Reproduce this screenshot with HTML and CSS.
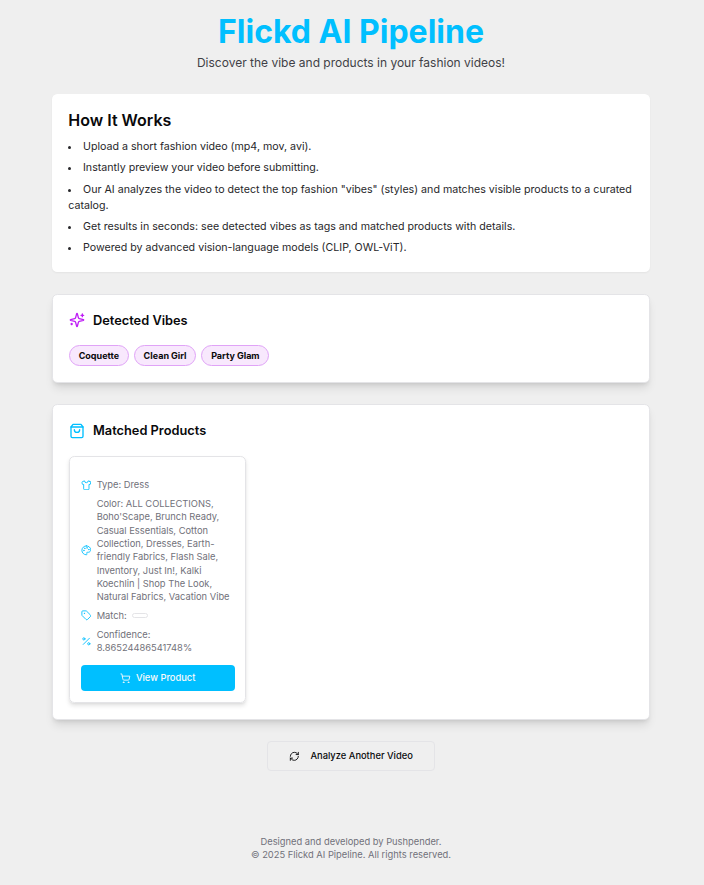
FILE: index.html
```html
<!DOCTYPE html>
<html lang="en">
<head>
<meta charset="utf-8">
<title>Flickd AI Pipeline</title>
<link rel="stylesheet" href="styles.css">
</head>
<body>
<header class="hero">
  <h1>Flickd AI Pipeline</h1>
  <p>Discover the vibe and products in your fashion videos!</p>
</header>
<main>
  <section class="how">
    <h2>How It Works</h2>
    <ul>
      <li>Upload a short fashion video (mp4, mov, avi).</li>
      <li>Instantly preview your video before submitting.</li>
      <li>Our AI analyzes the video to detect the top fashion "vibes" (styles) and matches visible products to a curated catalog.</li>
      <li>Get results in seconds: see detected vibes as tags and matched products with details.</li>
      <li>Powered by advanced vision-language models (CLIP, OWL-ViT).</li>
    </ul>
  </section>
  <section class="card">
    <h3 class="card-title">
      <svg class="icon purple" viewBox="0 0 24 24"><path d="M9.937 15.5A2 2 0 0 0 8.5 14.063l-6.135-1.582a.5.5 0 0 1 0-.962L8.5 9.936A2 2 0 0 0 9.937 8.5l1.582-6.135a.5.5 0 0 1 .963 0L14.063 8.5A2 2 0 0 0 15.5 9.937l6.135 1.581a.5.5 0 0 1 0 .964L15.5 14.063a2 2 0 0 0-1.437 1.437l-1.582 6.135a.5.5 0 0 1-.963 0z"/><path d="M20 3v4M22 5h-4M4 17v2M5 18H3"/></svg>
      <span class="vibes-label">Detected Vibes</span>
    </h3>
    <div class="tags"><span class="tag">Coquette</span><span class="tag">Clean Girl</span><span class="tag">Party Glam</span></div>
  </section>
  <section class="card">
    <h3 class="card-title">
      <svg class="icon" viewBox="0 0 24 24"><path d="M6 2 3 6v14a2 2 0 0 0 2 2h14a2 2 0 0 0 2-2V6l-3-4Z"/><path d="M3 6h18M16 10a4 4 0 0 1-8 0"/></svg>
      Matched Products
    </h3>
    <div class="products">
      <article class="product">
        <div class="row">
          <svg class="icon" viewBox="0 0 24 24"><path d="M20.38 3.46 16 2a4 4 0 0 1-8 0L3.62 3.46a2 2 0 0 0-1.34 2.23l.58 3.47a1 1 0 0 0 .99.84H6v10c0 1.1.9 2 2 2h8a2 2 0 0 0 2-2V10h2.15a1 1 0 0 0 .99-.84l.58-3.47a2 2 0 0 0-1.34-2.23z"/></svg>
          <span>Type: Dress</span>
        </div>
        <div class="row">
          <svg class="icon" viewBox="0 0 24 24"><circle cx="13.5" cy="6.5" r=".5"/><circle cx="17.5" cy="10.5" r=".5"/><circle cx="8.5" cy="7.5" r=".5"/><circle cx="6.5" cy="12.5" r=".5"/><path d="M12 2C6.5 2 2 6.5 2 12s4.5 10 10 10c.926 0 1.648-.746 1.648-1.688 0-.437-.18-.835-.437-1.125-.29-.289-.438-.652-.438-1.125a1.64 1.64 0 0 1 1.668-1.668h1.996c3.051 0 5.555-2.503 5.555-5.554C21.965 6.012 17.461 2 12 2z"/></svg>
          <span>Color: ALL COLLECTIONS, Boho'Scape, Brunch Ready, Casual Essentials, Cotton Collection, Dresses, Earth-friendly Fabrics, Flash Sale, Inventory, Just In!, Kalki Koechlin | Shop The Look, Natural Fabrics, Vacation Vibe</span>
        </div>
        <div class="row">
          <svg class="icon" viewBox="0 0 24 24"><path d="M12.586 2.586A2 2 0 0 0 11.172 2H4a2 2 0 0 0-2 2v7.172a2 2 0 0 0 .586 1.414l8.704 8.704a2.426 2.426 0 0 0 3.42 0l6.58-6.58a2.426 2.426 0 0 0 0-3.42z"/><circle cx="7.5" cy="7.5" r=".5"/></svg>
          <span>Match:</span><span class="empty-badge"></span>
        </div>
        <div class="row">
          <svg class="icon" viewBox="0 0 24 24"><path d="M19 5 5 19"/><circle cx="6.5" cy="6.5" r="2.5"/><circle cx="17.5" cy="17.5" r="2.5"/></svg>
          <span>Confidence: 8.86524486541748%</span>
        </div>
        <button class="view">
          <svg class="icon" viewBox="0 0 24 24"><circle cx="8" cy="21" r="1"/><circle cx="19" cy="21" r="1"/><path d="M2.05 2.05h2l2.66 12.42a2 2 0 0 0 2 1.58h9.78a2 2 0 0 0 1.95-1.57l1.65-7.43H5.12"/></svg>
          View Product
        </button>
      </article>
    </div>
  </section>
  <button class="again">
    <svg class="icon" viewBox="0 0 24 24"><path d="M3 12a9 9 0 0 1 9-9 9.75 9.75 0 0 1 6.74 2.74L21 8"/><path d="M21 3v5h-5M21 12a9 9 0 0 1-9 9 9.75 9.75 0 0 1-6.74-2.74L3 16"/><path d="M8 16H3v5"/></svg>
    Analyze Another Video
  </button>
</main>
<footer>
  <p>Designed and developed by Pushpender.</p>
  <p>© 2025 Flickd AI Pipeline. All rights reserved.</p>
</footer>
</body>
</html>
```
FILE: styles.css
```css
* { box-sizing: border-box; margin: 0; padding: 0; }
html { font-size: 10.6667px; background: #efefef; }
body {
  width: 702px;
  font-family: Inter, "Liberation Sans", sans-serif;
  line-height: 1.5;
  color: #09090b;
}
.hero { text-align: center; padding-top: 16px; }
.hero h1 { font-size: 3rem; line-height: 32px; font-weight: 700; color: #00bfff; }
.hero p { margin-top: 5.6px; font-size: 1.125rem; line-height: 18.67px; color: #3f3f46; }
main {
  width: 56rem;
  margin: 21.33px auto 0;
  display: flex;
  flex-direction: column;
  gap: 2rem;
}
.how { background: #fff; border-radius: 0.5rem; padding: 1.5rem; box-shadow: 0 1px 2px rgba(0, 0, 0, 0.05); }
.how h2 { font-size: 1.5rem; line-height: 2rem; font-weight: 600; margin-bottom: 0.75rem; }
.how ul { list-style: disc inside; display: flex; flex-direction: column; gap: 0.5rem; color: #27272a; }
.card {
  background: #fff;
  border: 1px solid #e4e4e7;
  border-radius: 0.5rem;
  padding: 15.67px;
  box-shadow: 0 6.67px 10px -2px rgba(0, 0, 0, 0.1), 0 2.67px 4px -2.67px rgba(0, 0, 0, 0.1);
}
.card-title {
  display: flex;
  align-items: center;
  gap: 0.75rem;
  padding-top: 0.8px;
  margin-bottom: 15.2px;
  font-size: 1.2rem;
  line-height: 1.75rem;
  font-weight: 600;
}
.vibes-label { padding-top: 0.7px; margin-bottom: -0.7px; }
.icon {
  flex: none;
  width: 1rem;
  height: 1rem;
  fill: none;
  stroke: #00bfff;
  stroke-width: 2;
  stroke-linecap: round;
  stroke-linejoin: round;
}
.card-title .icon { width: 1.5rem; height: 1.5rem; }
.card-title .purple { stroke: #bf1ff5; }
.tags { display: flex; gap: 5.2px; }
.tag {
  padding: 0 8.7px;
  border: 1px solid #e0a3f7;
  border-radius: 999px;
  background: #f8e8fd;
  font-size: 9px;
  line-height: 19.33px;
  font-weight: 680;
}
.products { display: grid; grid-template-columns: repeat(3, 1fr); gap: 1.5rem; }
.product {
  display: flex;
  flex-direction: column;
  gap: 0.5rem;
  padding: 21.9px 10.67px 10.9px;
  border: 1px solid #e4e4e7;
  border-radius: 0.5rem;
  box-shadow: 0 2.67px 4px -0.67px rgba(0, 0, 0, 0.1), 0 1.33px 2.67px -1.33px rgba(0, 0, 0, 0.1);
}
.row { display: flex; align-items: center; gap: 0.5rem; font-size: 0.875rem; line-height: 1.25rem; color: #71717a; }
.empty-badge { width: 16px; height: 5px; border: 1px solid #e4e4e7; border-radius: 3px; }
button {
  display: flex;
  align-items: center;
  justify-content: center;
  font: 500 0.875rem/1.25rem Inter, "Liberation Sans", sans-serif;
}
.view { height: 26px; margin-top: 0.5rem; gap: 0.5rem; border: 0; border-radius: 4px; background: #00bfff; color: #fafafa; }
.view .icon { stroke: #fafafa; }
.again {
  align-self: center;
  width: 168px;
  height: 30px;
  gap: 10.67px;
  border: 1px solid #e4e4e7;
  border-radius: 4px;
  background: transparent;
  color: #09090b;
}
.again .icon { stroke: #09090b; }
footer { margin-top: 63.8px; text-align: center; font-size: 0.875rem; line-height: 1.25rem; color: #71717a; }
```
